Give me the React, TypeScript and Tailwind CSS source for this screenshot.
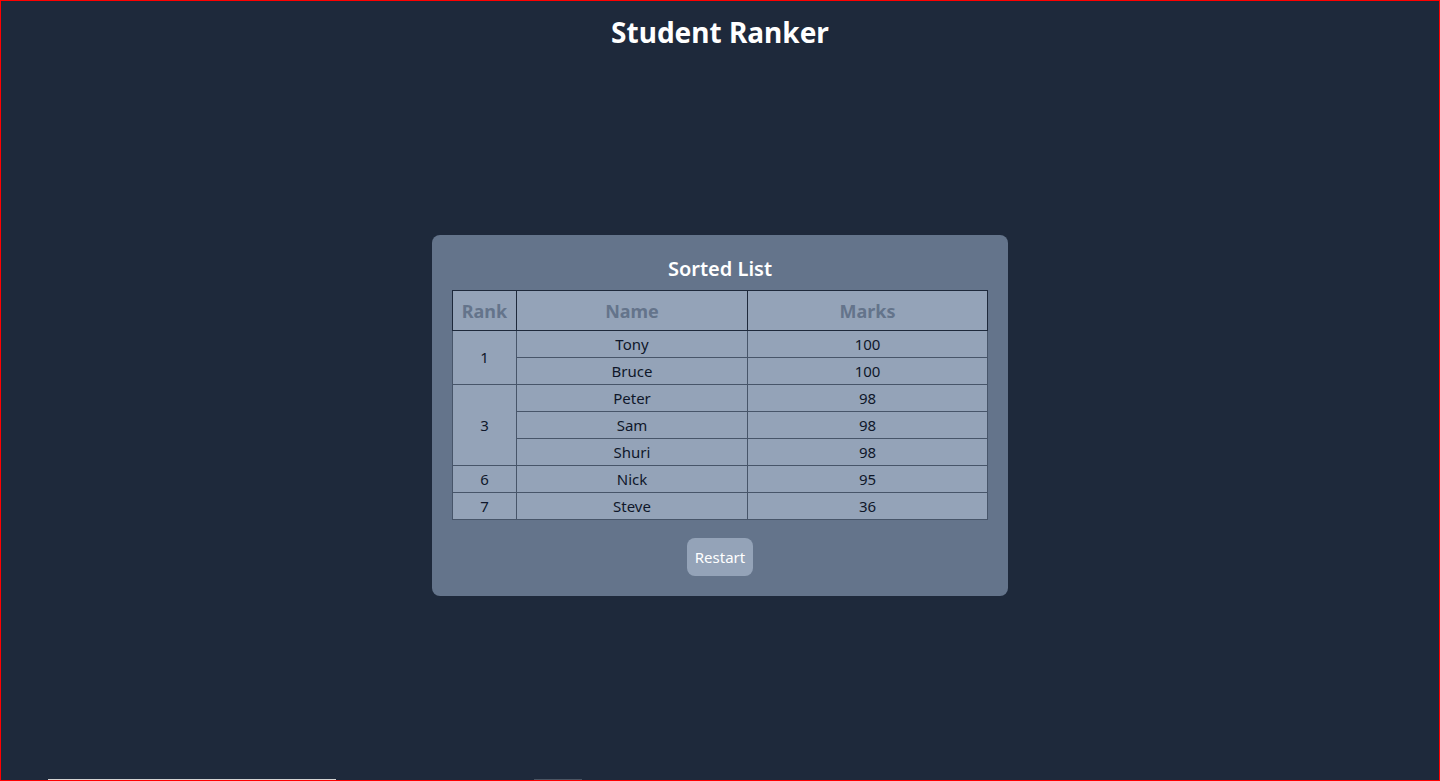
import React from 'react'

const students = [
  { rank: 1, span: 2, rows: [{ name: 'Tony', marks: 100 }, { name: 'Bruce', marks: 100 }] },
  { rank: 3, span: 3, rows: [{ name: 'Peter', marks: 98 }, { name: 'Sam', marks: 98 }, { name: 'Shuri', marks: 98 }] },
  { rank: 6, span: 1, rows: [{ name: 'Nick', marks: 95 }] },
  { rank: 7, span: 1, rows: [{ name: 'Steve', marks: 36 }] },
]

export default function App() {
  return (
    <div
      className="relative flex h-screen flex-col border border-[#ff0000] bg-[#1e293b]"
      style={{ fontFamily: '"Noto Sans", "Open Sans", sans-serif' }}
    >
      <h1 className="pt-[13px] pb-px text-center text-[28px] leading-9 font-bold text-white">Student Ranker</h1>

      <div className="flex flex-1 items-center justify-center">
        <div className="w-[576px] rounded-lg bg-[#64748b] px-5 pt-5 pb-5">
          <h2 className="mb-[7px] text-center text-xl font-semibold text-white">Sorted List</h2>
          <table className="w-full border-collapse bg-[#94a3b8] text-center text-[15px] text-[#0f172a]">
            <thead>
              <tr className="h-10">
                <th className="w-16 border border-[#1e293b] p-0 text-lg font-bold text-[#64748b]">Rank</th>
                <th className="w-[231px] border border-[#1e293b] p-0 text-lg font-bold text-[#64748b]">Name</th>
                <th className="border border-[#1e293b] p-0 text-lg font-bold text-[#64748b]">Marks</th>
              </tr>
            </thead>
            <tbody>
              {students.map((group) =>
                group.rows.map((row, i) => (
                  <tr key={row.name} className="h-[27px]">
                    {i === 0 && (
                      <td rowSpan={group.span} className="border border-[#475569] p-0">
                        {group.rank}
                      </td>
                    )}
                    <td className="border border-[#475569] p-0">{row.name}</td>
                    <td className="border border-[#475569] p-0">{row.marks}</td>
                  </tr>
                ))
              )}
            </tbody>
          </table>
          <div className="mt-[18px] flex justify-center">
            <button className="h-[38px] rounded-lg bg-[#94a3b8] px-2 text-[15px] text-white">Restart</button>
          </div>
        </div>
      </div>

      <div className="absolute bottom-0 left-[47px] h-px w-[288px] bg-[#d4d4d4]" />
      <div className="absolute bottom-0 left-[533px] h-px w-[48px] bg-[#4b5563]" />
    </div>
  )
}
